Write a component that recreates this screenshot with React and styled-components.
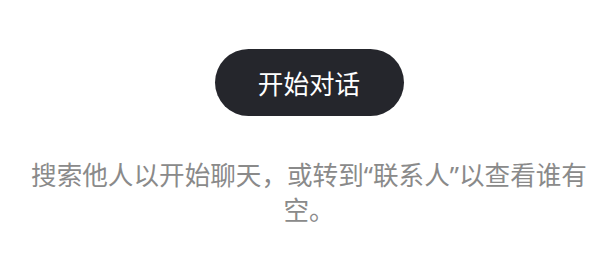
import React from "react";
import styled, { createGlobalStyle } from "styled-components";

const GlobalStyle = createGlobalStyle`
  html, body {
    margin: 0;
    padding: 0;
    background: #ffffff;
  }
  body {
    font-family: "Noto Sans", "Noto Sans CJK SC", sans-serif;
  }
`;

const Page = styled.main`
  display: flex;
  flex-direction: column;
  align-items: center;
  padding: 49px 0 0 18px;
  width: 600px;
  box-sizing: border-box;
`;

const StartButton = styled.button`
  display: flex;
  align-items: center;
  justify-content: center;
  width: 189px;
  height: 67px;
  border: none;
  border-radius: 34px;
  background: #25262c;
  color: #ffffff;
  font-family: "Noto Sans CJK SC", sans-serif;
  font-size: 25.6px;
  line-height: 1;
  padding: 0;
  cursor: pointer;
`;

const Hint = styled.p`
  margin: 42px 0 0;
  max-width: 570px;
  text-align: center;
  color: #8a8a8a;
  font-family: "Noto Sans", "Noto Sans CJK SC", sans-serif;
  font-size: 25.6px;
  line-height: 35px;
`;

export default function App() {
  return (
    <>
      <GlobalStyle />
      <Page>
        <StartButton>开始对话</StartButton>
        <Hint>搜索他人以开始聊天，或转到“联系人”以查看谁有空。</Hint>
      </Page>
    </>
  );
}
